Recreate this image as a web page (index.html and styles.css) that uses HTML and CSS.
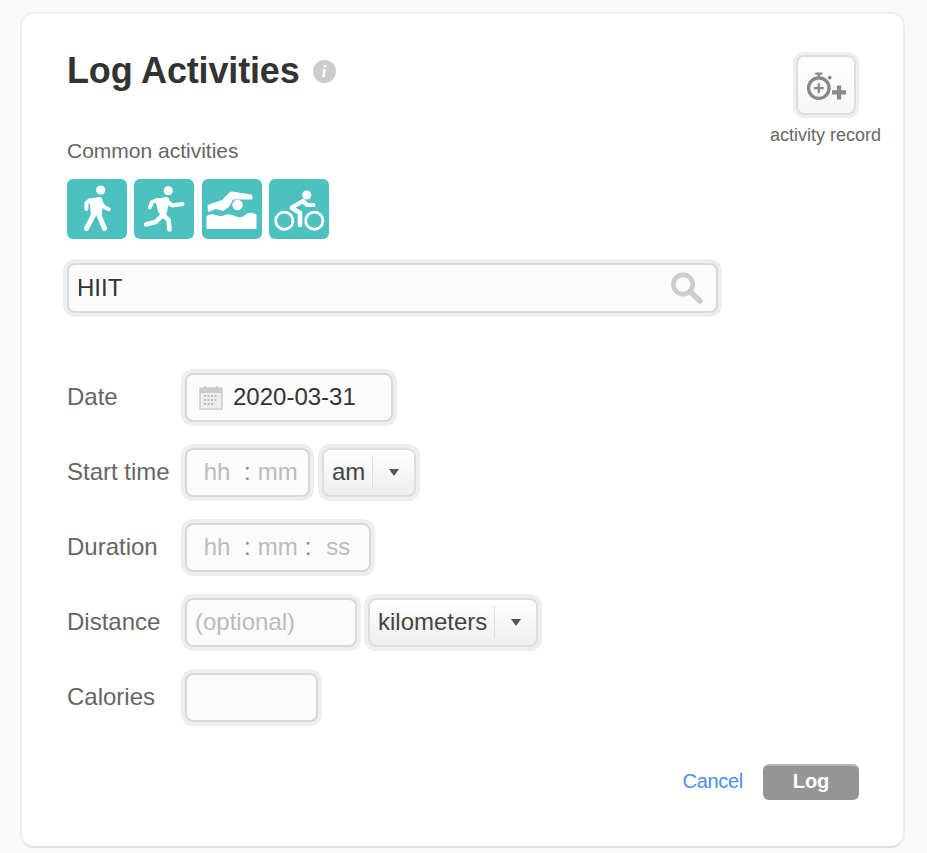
FILE: index.html
```html
<!DOCTYPE html>
<html lang="en">
<head>
    <meta charset="UTF-8">
    <meta name="viewport" content="width=device-width, initial-scale=1.0">
    <title>Log Activities</title>
    <link rel="stylesheet" href="styles.css">
</head>
<body>
    <div class="log-card">
        <div class="top-area">
            <div class="top-main">
                <div class="title-row">
                    <h1>Log Activities</h1>
                    <span class="info-icon">i</span>
                </div>

                <p class="common-label">Common activities</p>
                <div class="activity-icons">
                    <!-- walk -->
                    <button class="activity-tile" type="button" aria-label="Walking">
                        <svg width="60" height="60" viewBox="0 0 60 60">
                            <circle cx="33.7" cy="11" r="4.6" fill="#fff"/>
                            <path d="M22 20 L32 18 Q35.5 18 35.5 22 L35 36 L24 36 Z" fill="#fff"/>
                            <path d="M27 35 L19.5 49.5 M31.5 35 L37.5 49.5" stroke="#fff" stroke-width="5" stroke-linecap="round" fill="none"/>
                            <path d="M23 21 L19.4 24 L19.4 30 M33 22 L37 28 L41.8 30.2" stroke="#fff" stroke-width="4" stroke-linecap="round" stroke-linejoin="round" fill="none"/>
                        </svg>
                    </button>
                    <!-- run -->
                    <button class="activity-tile" type="button" aria-label="Running">
                        <svg width="60" height="60" viewBox="0 0 60 60">
                            <circle cx="34.3" cy="11.7" r="4.6" fill="#fff"/>
                            <path d="M21 20 L32 18 Q36 18.5 35.5 22 L32 37 L24.5 34 Z" fill="#fff"/>
                            <path d="M28 37 L21.5 43 L12 45.5 M28 35 L34.5 41 L35.5 50.5" stroke="#fff" stroke-width="4.6" stroke-linecap="round" stroke-linejoin="round" fill="none"/>
                            <path d="M23 21 L18 23 L15.8 28.5 M34 23 L38 26.5 L48.5 25" stroke="#fff" stroke-width="4" stroke-linecap="round" stroke-linejoin="round" fill="none"/>
                        </svg>
                    </button>
                    <!-- swim -->
                    <button class="activity-tile" type="button" aria-label="Swimming">
                        <svg width="60" height="60" viewBox="0 0 60 60">
                            <circle cx="35.5" cy="26" r="5.2" fill="#fff"/>
                            <path d="M5.5 26 L20 21 L28 13 Q30 12 33 13 L49 15.5 Q51.5 17 50 20.5 L38 20.5 L31 20.5 L27 28 L21 32 L14 30 L6 33 Z" fill="#fff"/>
                            <path d="M4.5 37 Q9 34 14 36 T23 36 T33 37 T43 36 T54.5 35.5 L54.5 50 L4.5 50 Z" fill="#fff"/>
                        </svg>
                    </button>
                    <!-- bike -->
                    <button class="activity-tile" type="button" aria-label="Cycling">
                        <svg width="60" height="60" viewBox="0 0 60 60">
                            <circle cx="37.7" cy="16" r="4.6" fill="#fff"/>
                            <circle cx="15.3" cy="41.7" r="8.6" fill="none" stroke="#fff" stroke-width="2.8"/>
                            <circle cx="45.3" cy="41.7" r="8.6" fill="none" stroke="#fff" stroke-width="2.8"/>
                            <path d="M23 28.5 L34 22 L38 26 L44.5 26" stroke="#fff" stroke-width="4.2" stroke-linecap="round" stroke-linejoin="round" fill="none"/>
                            <path d="M23 29 L31 34 L31 46" stroke="#fff" stroke-width="4.6" stroke-linecap="round" stroke-linejoin="round" fill="none"/>
                        </svg>
                    </button>
                </div>

                <div class="field search-field">
                    <input type="text" value="HIIT">
                    <svg width="36" height="36" viewBox="0 0 36 36">
                        <circle cx="15" cy="14.5" r="9.6" fill="none" stroke="#ccc" stroke-width="4.6"/>
                        <path d="M22.5 22 L32 31" stroke="#ccc" stroke-width="5.4" stroke-linecap="round"/>
                    </svg>
                </div>
            </div>

            <div class="record-box">
                <button class="record-btn" type="button" aria-label="activity record">
                    <svg width="56" height="56" viewBox="0 0 60 60">
                        <circle cx="22.3" cy="33.3" r="11" fill="none" stroke="#888" stroke-width="3.6"/>
                        <path d="M22.3 28 V38.6 M17 33.3 H27.6" stroke="#888" stroke-width="2.4"/>
                        <path d="M18.5 17.8 H26 M22.3 18 V22" stroke="#888" stroke-width="2.6"/>
                        <circle cx="34" cy="22" r="2" fill="#888"/>
                        <path d="M44 30.5 V45.5 M36.5 38 H51.5" stroke="#888" stroke-width="4.6"/>
                    </svg>
                </button>
                <span>activity record</span>
            </div>
        </div>

        <form class="log-form">
            <div class="form-row">
                <label>Date</label>
                <div class="field date-field">
                    <svg class="calendar-icon" width="26" height="26" viewBox="0 0 26 26">
                        <rect x="0" y="0" width="26" height="26" fill="#fff"/>
                        <path d="M2 4 H24 V25 H2 Z" fill="#eee" stroke="#ccc" stroke-width="1.5"/>
                        <rect x="2" y="4" width="22" height="5" fill="#ccc"/>
                        <path d="M7 2 V6 M19 2 V6" stroke="#ccc" stroke-width="2"/>
                        <path d="M6 12 H20 M6 16 H20 M6 20 H17" stroke="#bbb" stroke-width="2" stroke-dasharray="2 1.5"/>
                    </svg>
                    <input type="text" value="2020-03-31">
                </div>
            </div>

            <div class="form-row">
                <label>Start time</label>
                <div class="field time-field start-time">
                    <input type="text" placeholder="hh">
                    <span class="colon">:</span>
                    <input type="text" placeholder="mm">
                </div>
                <div class="select-box am-select">
                    <span class="select-value">am</span>
                    <span class="select-arrow"></span>
                </div>
            </div>

            <div class="form-row">
                <label>Duration</label>
                <div class="field time-field duration">
                    <input type="text" placeholder="hh">
                    <span class="colon">:</span>
                    <input type="text" placeholder="mm">
                    <span class="colon">:</span>
                    <input type="text" placeholder="ss">
                </div>
            </div>

            <div class="form-row">
                <label>Distance</label>
                <div class="field distance-field">
                    <input type="text" placeholder="(optional)">
                </div>
                <div class="select-box unit-select">
                    <span class="select-value">kilometers</span>
                    <span class="select-arrow"></span>
                </div>
            </div>

            <div class="form-row">
                <label>Calories</label>
                <div class="field calories-field">
                    <input type="text">
                </div>
            </div>

            <div class="form-actions">
                <a href="#" class="cancel-link">Cancel</a>
                <button type="button" class="log-btn">Log</button>
            </div>
        </form>
    </div>
</body>
</html>
```

FILE: styles.css
```css
* {
    margin: 0;
    padding: 0;
    box-sizing: border-box;
    font-family: 'Liberation Sans', Arial, sans-serif;
}

body {
    background: #f9f9f9;
    color: #333;
    margin: 12px 0 0 20px;
}

.log-card {
    width: 885px;
    height: 836px;
    background: white;
    border: 2px solid #eee;
    border-bottom-color: #e2e2e2;
    border-radius: 14px;
    padding: 37px 22px 0 45px;
}

.top-area {
    display: flex;
    justify-content: space-between;
    align-items: flex-start;
}

.top-main {
    width: 651px;
}

.title-row {
    display: flex;
    align-items: center;
    height: 40px;
}

.title-row h1 {
    font-size: 36px;
    font-weight: 700;
    letter-spacing: -0.15px;
    color: #333;
}

.info-icon {
    width: 23px;
    height: 23px;
    margin-left: 13px;
    margin-top: 1px;
    border-radius: 50%;
    background: #ccc;
    color: white;
    font-family: 'Liberation Serif', serif;
    font-size: 17px;
    font-style: italic;
    font-weight: 700;
    line-height: 23px;
    text-align: center;
}

.common-label {
    margin-top: 48px;
    font-size: 21px;
    line-height: 24px;
    color: #666;
}

.activity-icons {
    display: flex;
    gap: 7.33px;
    margin-top: 16px;
}

.activity-tile {
    width: 60px;
    height: 60px;
    background: #4dc1bf;
    border: none;
    border-radius: 6px;
    display: block;
}

.activity-tile svg {
    display: block;
}

.record-box {
    width: 111px;
    margin-top: 4px;
    display: flex;
    flex-direction: column;
    align-items: center;
    font-size: 18px;
    line-height: 20px;
    color: #666;
    white-space: nowrap;
}

.record-btn {
    width: 60px;
    height: 60px;
    margin-bottom: 10px;
    background: linear-gradient(#fff, #f6f6f6);
    border: 2px solid #ddd;
    border-radius: 8px;
    box-shadow: 0 0 0 3px #eee;
}

.record-btn svg {
    display: block;
}

.field {
    display: flex;
    align-items: center;
    height: 49px;
    background: #fbfbfb;
    border: 2px solid #d8d8d8;
    border-radius: 8px;
    box-shadow: 0 0 0 4px #eee;
}

.field input {
    border: none;
    outline: none;
    background: transparent;
    font-size: 24px;
    color: #333;
    min-width: 0;
}

.field input::placeholder {
    color: #bbb;
    opacity: 1;
}

.search-field {
    height: 50px;
    margin-top: 24px;
    padding: 0 12px 0 8px;
}

.search-field input {
    flex: 1;
}

.log-form {
    margin-top: 60px;
}

.form-row {
    display: flex;
    align-items: center;
    gap: 12px;
    height: 49px;
    margin-bottom: 26px;
}

.form-row label {
    width: 106px;
    padding-bottom: 2px;
    font-size: 24px;
    color: #666;
}

.log-form .field,
.select-box {
    padding-bottom: 2px;
}

.date-field {
    width: 208px;
    padding-left: 11px;
}

.calendar-icon {
    flex-shrink: 0;
}

.date-field input {
    width: 150px;
    margin-left: 9px;
}

.time-field {
    padding-left: 10px;
}

.time-field input {
    width: 40px;
    text-align: center;
}

.colon {
    margin: 0 7px;
    font-size: 24px;
    color: #888;
}

.start-time {
    width: 125px;
}

.duration {
    width: 186px;
}

.distance-field {
    width: 172px;
    padding-left: 8px;
}

.distance-field input {
    width: 150px;
}

.calories-field {
    width: 133px;
    padding-left: 8px;
}

.calories-field input {
    width: 110px;
}

.select-box {
    display: flex;
    align-items: center;
    height: 49px;
    padding-left: 8px;
    background: linear-gradient(#fff, #eee);
    border: 2px solid #ddd;
    border-radius: 8px;
    box-shadow: 0 0 0 4px #eee;
    font-size: 24px;
    color: #444;
}

.select-value {
    display: flex;
    align-items: center;
    height: 32px;
    padding-right: 7px;
    border-right: 1px solid #ddd;
}

.select-arrow {
    width: 0;
    height: 0;
    margin-left: 16px;
    margin-top: 2px;
    border-left: 5.5px solid transparent;
    border-right: 5.5px solid transparent;
    border-top: 7px solid #555;
}

.am-select {
    width: 94px;
}

.unit-select {
    width: 170px;
    margin-left: -1px;
}

.form-actions {
    display: flex;
    justify-content: flex-end;
    align-items: center;
    gap: 20px;
    margin-top: 42px;
    margin-right: 22px;
}

.cancel-link {
    padding-bottom: 2px;
    font-size: 20px;
    letter-spacing: -0.3px;
    color: #4a8ff0;
    text-decoration: none;
}

.log-btn {
    width: 96px;
    height: 36px;
    padding-bottom: 3px;
    background: #959595;
    border: none;
    border-top: 2px solid #b5b5b5;
    border-radius: 6px;
    color: white;
    font-size: 20px;
    font-weight: 700;
}
```
